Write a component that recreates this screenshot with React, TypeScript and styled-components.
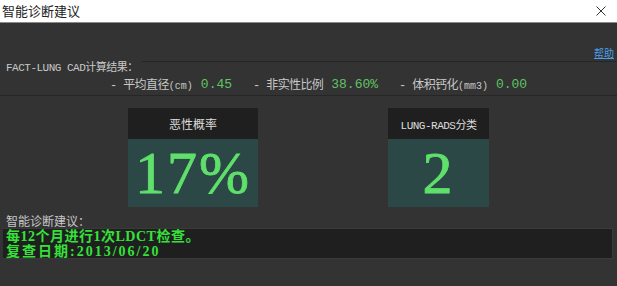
import React from "react";
import styled, { createGlobalStyle } from "styled-components";

interface Metric {
  label: string;
  unit?: string;
  value: string;
}

const metrics: Metric[] = [
  { label: "- 平均直径", unit: "(cm)", value: "0.45" },
  { label: "- 非实性比例", value: "38.60%" },
  { label: "- 体积钙化", unit: "(mm3)", value: "0.00" },
];

const App: React.FC = () => {
  return (
    <>
      <GlobalStyle />
      <Window>
        <TitleBar>
          <Title>智能诊断建议</Title>
          <Close>
            <svg width="10" height="10" viewBox="0 0 10 10">
              <path d="M0.5 0.5 L9.5 9.5 M9.5 0.5 L0.5 9.5" stroke="#333" strokeWidth="1" />
            </svg>
          </Close>
        </TitleBar>
        <Body>
          <HelpRow>
            <Help>帮助</Help>
          </HelpRow>
          <Panel>
            <LegendRow>
              <Legend>FACT-LUNG CAD计算结果：</Legend>
              <Rule />
            </LegendRow>
            <MetricRow>
              {metrics.map((m) => (
                <MetricItem key={m.label}>
                  <MetricLabel>
                    {m.label}
                    {m.unit && <Unit>{m.unit}</Unit>}
                  </MetricLabel>
                  <MetricValue>{m.value}</MetricValue>
                </MetricItem>
              ))}
            </MetricRow>
          </Panel>
          <Cards>
            <Card $width={130}>
              <CardHead>恶性概率</CardHead>
              <CardBody>17%</CardBody>
            </Card>
            <Card $width={101}>
              <CardHead $mono>LUNG-RADS分类</CardHead>
              <CardBody>2</CardBody>
            </Card>
          </Cards>
          <AdviceLabel>智能诊断建议：</AdviceLabel>
          <AdviceBox>
            <AdviceLine $spacing={0.5}>每12个月进行1次LDCT检查。</AdviceLine>
            <AdviceLine $spacing={2}>复查日期:2013/06/20</AdviceLine>
          </AdviceBox>
        </Body>
      </Window>
    </>
  );
};

export default App;

// style
const GlobalStyle = createGlobalStyle`
  html, body {
    margin: 0;
    padding: 0;
    background: #333333;
  }
  body {
    font-family: "Noto Sans CJK SC", "Liberation Sans", sans-serif;
  }
`;

const Window = styled.div`
  width: 617px;
  height: 286px;
  display: flex;
  flex-direction: column;
  overflow: hidden;
`;

const TitleBar = styled.div`
  height: 22px;
  background: #ffffff;
  border-bottom: 1px solid #8a8a8a;
  display: flex;
  align-items: center;
  justify-content: space-between;
  padding: 0 11px 0 2px;
`;

const Title = styled.span`
  font-size: 13px;
  color: #222222;
  line-height: 22px;
`;

const Close = styled.span`
  display: flex;
  align-items: center;
`;

const Body = styled.div`
  flex: 1;
  background: #333333;
  display: flex;
  flex-direction: column;
`;

const HelpRow = styled.div`
  height: 36px;
  display: flex;
  justify-content: flex-end;
  align-items: flex-end;
  padding: 0 3px 0 0;
`;

const Help = styled.span`
  font-size: 10px;
  line-height: 12px;
  color: #4b9fe6;
  text-decoration: underline;
`;

const Panel = styled.div`
  margin-top: 2px;
  border-bottom: 1px solid #262626;
  height: 34px;
  display: flex;
  flex-direction: column;
`;

const LegendRow = styled.div`
  display: flex;
  align-items: flex-start;
`;

const Legend = styled.span`
  font-family: "Liberation Mono", "Noto Sans CJK SC", monospace;
  font-size: 11px;
  letter-spacing: -0.5px;
  line-height: 12px;
  color: #c8c8c8;
  padding: 1px 4px 0 6px;
`;

const Rule = styled.div`
  flex: 1;
  height: 1px;
  background: #262626;
`;

const MetricRow = styled.div`
  display: flex;
  align-items: center;
  gap: 21px;
  padding: 1px 0 0 110px;
`;

const MetricItem = styled.div`
  display: flex;
  align-items: center;
  gap: 8px;
`;

const MetricLabel = styled.span`
  font-family: "Liberation Mono", "Noto Sans CJK SC", monospace;
  font-size: 12px;
  letter-spacing: -0.6px;
  color: #c8c8c8;
`;

const Unit = styled.span`
  font-size: 10px;
  letter-spacing: 0;
`;

const MetricValue = styled.span`
  font-family: "Liberation Mono", monospace;
  font-size: 13px;
  color: #5fc463;
`;

const Cards = styled.div`
  display: flex;
  gap: 130px;
  padding: 12px 0 0 128px;
`;

const Card = styled.div<{ $width: number }>`
  width: ${(p) => p.$width}px;
  display: flex;
  flex-direction: column;
`;

const CardHead = styled.div<{ $mono?: boolean }>`
  height: 31px;
  background: #1f1f1f;
  color: #dddddd;
  display: flex;
  align-items: center;
  justify-content: center;
  font-family: ${(p) =>
    p.$mono ? `"Liberation Mono", "Noto Sans CJK SC", monospace` : `"Noto Sans CJK SC", sans-serif`};
  font-size: ${(p) => (p.$mono ? "11px" : "12px")};
  letter-spacing: ${(p) => (p.$mono ? "-0.5px" : "0")};
`;

const CardBody = styled.div`
  height: 68px;
  background: #2b4846;
  color: #5fe06b;
  display: flex;
  align-items: center;
  justify-content: center;
  font-family: "Liberation Serif", serif;
  font-size: 60px;
  letter-spacing: 2px;
  line-height: 68px;
  -webkit-text-stroke: 0.8px #5fe06b;
`;

const AdviceLabel = styled.div`
  font-size: 12px;
  line-height: 14px;
  color: #c8c8c8;
  padding: 7px 0 0 6px;
`;

const AdviceBox = styled.div`
  margin: 0 4px 0 3px;
  height: 31px;
  background: #1f1f1f;
  border: 1px solid #3a3a3a;
  border-left: none;
  box-sizing: border-box;
  padding: 0 0 0 3px;
  display: flex;
  flex-direction: column;
`;

const AdviceLine = styled.div<{ $spacing: number }>`
  font-family: "Liberation Serif", "Noto Sans CJK SC", serif;
  font-weight: bold;
  font-size: 14px;
  line-height: 15px;
  letter-spacing: ${(p) => p.$spacing}px;
  color: #35e23a;
`;
